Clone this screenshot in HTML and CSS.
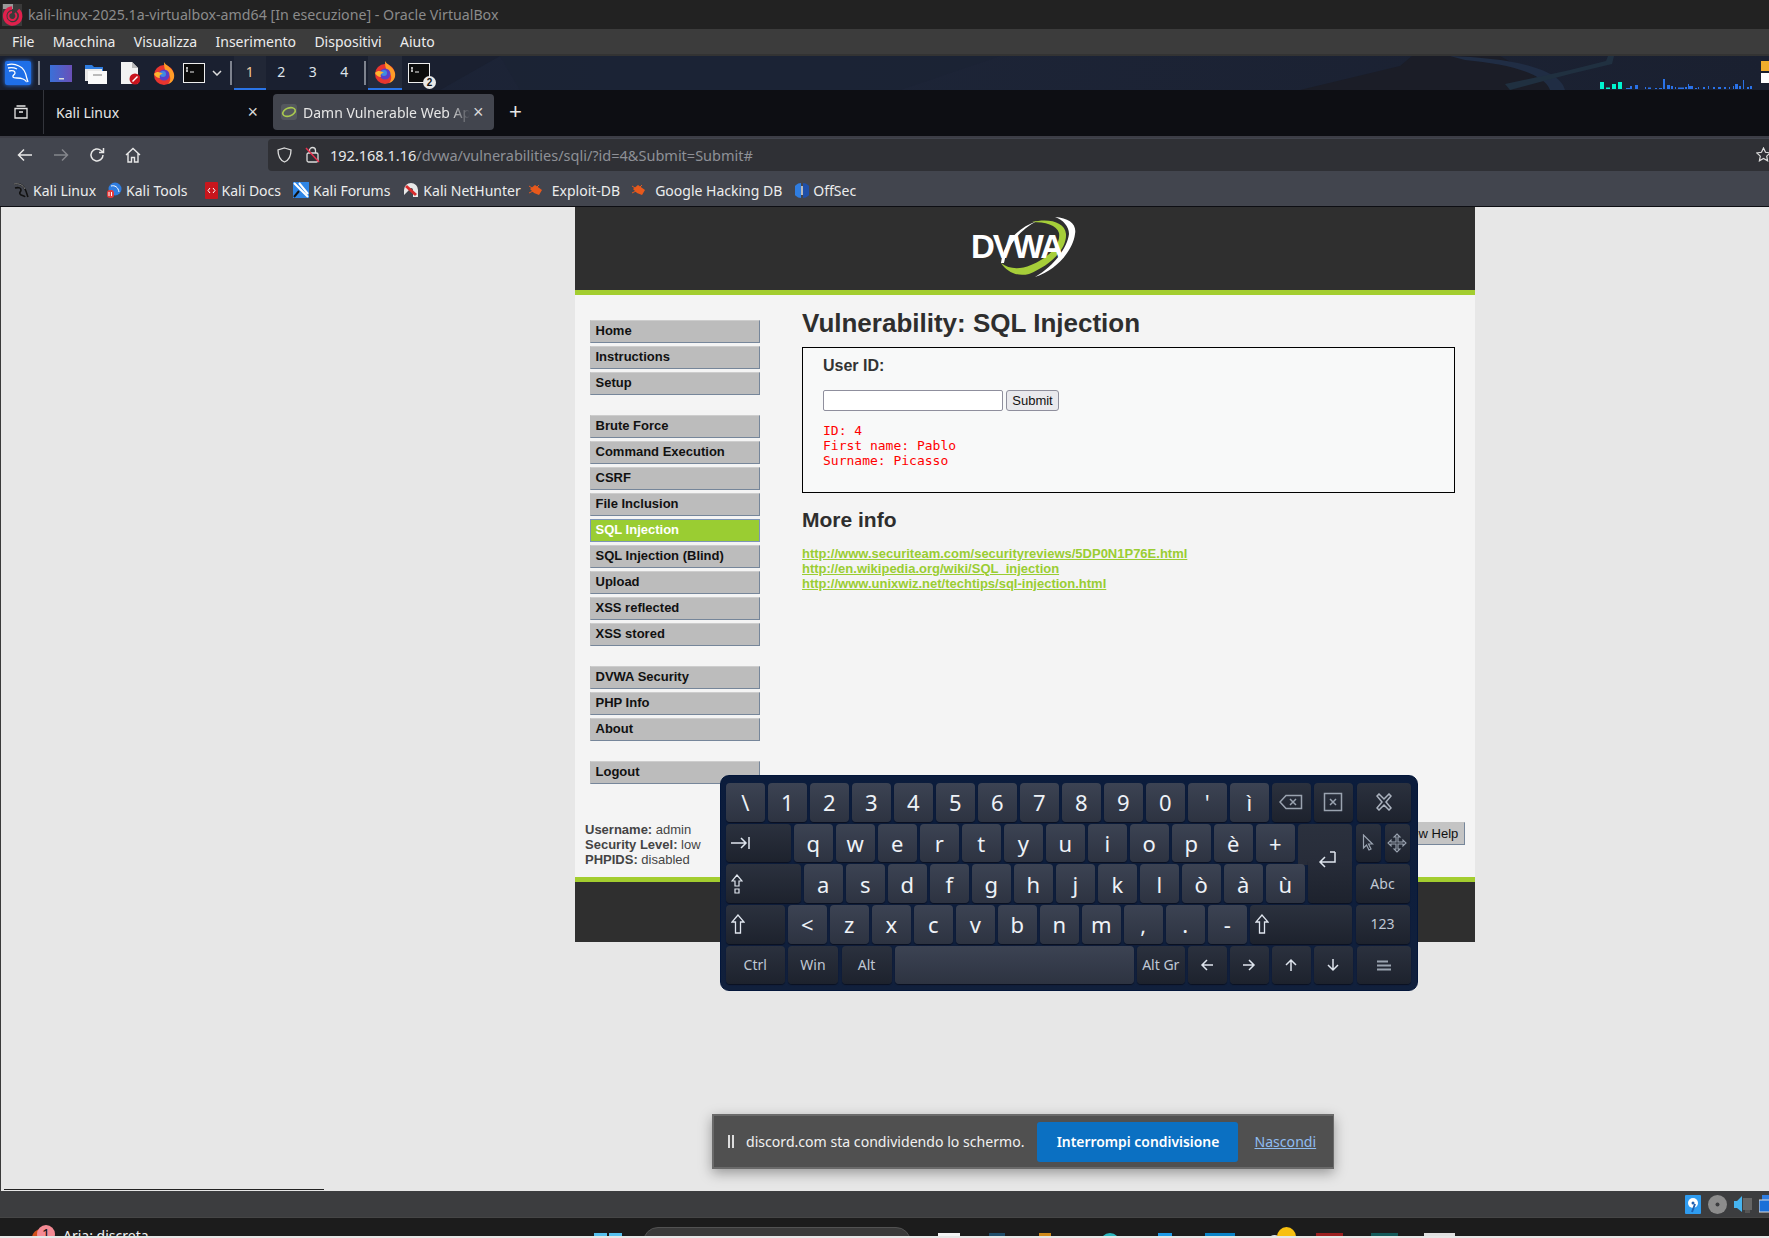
FILE: index.html
```html
<!DOCTYPE html>
<html lang="en">
<head>
  <meta charset="UTF-8" />
  <title>kali-linux-2025.1a-virtualbox-amd64 [In esecuzione] - Oracle VirtualBox</title>
  <link rel="stylesheet" href="styles.css">
</head>
<body>

  <!-- VirtualBox window chrome -->
  <div class="vb-title">
    <svg class="vb-logo" width="22" height="24" viewBox="0 0 22 24"><rect x="1" y="1" width="20" height="22" fill="#3a3a3a"/><rect x="2" y="1" width="10" height="5" fill="#999"/><path d="M11 5a8 8 0 1 0 6 2" fill="none" stroke="#e0204c" stroke-width="3.5"/><path d="M11 9a4 4 0 1 0 3 1" fill="none" stroke="#e0204c" stroke-width="2"/></svg>
    <span>kali-linux-2025.1a-virtualbox-amd64 [In esecuzione] - Oracle VirtualBox</span>
  </div>
  <div class="vb-menu">
    <span>File</span><span>Macchina</span><span>Visualizza</span><span>Inserimento</span><span>Dispositivi</span><span>Aiuto</span>
  </div>

  <!-- Kali panel -->
  <div class="panel">
    <svg class="panel-bg" width="1769" height="34" viewBox="0 0 1769 34">
      <path d="M0 0H500L440 34H0Z" fill="#1a2030"/>
      <path d="M500 0H1000L900 34H520Z" fill="#1c2334" opacity=".8"/>
      <path d="M1300 34L1400 10L1412 0H1500L1560 34Z" fill="#1b1d27"/>
      <path d="M1450 0C1510 2 1560 12 1565 34H1550C1545 18 1510 8 1465 4Z" fill="#202d44"/>
      <path d="M1510 34L1570 18L1612 8L1614 0H1608L1606 5L1570 14L1505 28Z" fill="#203040"/>
    </svg>
    <div class="panel-kali">
      <svg width="26" height="24" viewBox="0 0 26 24"><path d="M2 4c3-1 8-1 12 1 5 2 7 7 8 13l1 3M3 7c4-1 7 0 9 1M4 10c4-1 6 0 6 2s-3 2-2 4 6 0 10 2 3 3 3 3" fill="none" stroke="#fff" stroke-width="1.300"/></svg>
    </div>
    <i class="panel-sep"></i>
    <div class="panel-apps">
      <svg width="22" height="17" viewBox="0 0 22 17"><defs><linearGradient id="gd" x1="0" x2="1"><stop offset="0" stop-color="#3a70d8"/><stop offset="1" stop-color="#6a50b8"/></linearGradient></defs><rect width="22" height="17" fill="url(#gd)"/><rect x="9" y="13" width="5" height="1.5" fill="#ddd"/></svg>
      <svg class="files" width="23" height="21" viewBox="0 0 23 21"><path d="M1 2h7l2 2h9v4H1Z" fill="#2f7de0"/><rect x="1" y="6" width="17" height="12" fill="#e8e8e8"/><rect x="4" y="8" width="19" height="13" fill="#fafafa"/><rect x="9" y="11" width="9" height="2" fill="#bbb"/></svg>
      <svg class="doc" width="20" height="24" viewBox="0 0 20 24"><path d="M1 1h11l6 6v16H1Z" fill="#f2f2f2"/><path d="M12 1l6 6h-6Z" fill="#bbb"/><circle cx="15" cy="18" r="5.5" fill="#c9141e"/><path d="M12.5 20.500l5-5" stroke="#fff" stroke-width="1.500"/></svg>
      <svg class="ff" width="22" height="23" viewBox="0 0 22 23"><use href="#firefox"/></svg>
      <svg class="tm" width="22" height="20" viewBox="0 0 22 20"><use href="#term"/></svg>
      <svg class="chev" width="10" height="6" viewBox="0 0 10 6"><path d="M1 1l4 4 4-4" fill="none" stroke="#ddd" stroke-width="1.500"/></svg>
    </div>
    <i class="panel-sep sep-b"></i>
    <div class="workspaces">
      <span class="active">1</span><span>2</span><span>3</span><span>4</span>
    </div>
    <i class="panel-sep sep-c"></i>
    <div class="task active">
      <svg width="22" height="23" viewBox="0 0 22 23">
        <symbol id="firefox" viewBox="0 0 22 23"><circle cx="11" cy="13" r="10" fill="#e8352f"/><path d="M11 0c1 3 8 5 10 12 1 5-2 9-6 10 3-3 3-8 0-10-2-2-4-4-4-12Z" fill="#ff9c27"/><circle cx="11" cy="13" r="5.500" fill="#5a3ec8"/><circle cx="10" cy="12" r="3" fill="#3f8ae0"/><path d="M1 12c3-3 6-2 9 0-3 0-4 2-3 4-3 0-5-2-6-4Z" fill="#ffb52e"/></symbol>
        <use href="#firefox"/>
      </svg>
    </div>
    <div class="task term">
      <svg width="22" height="20" viewBox="0 0 22 20">
        <symbol id="term" viewBox="0 0 22 20"><rect x=".5" y=".5" width="21" height="19" fill="#0c0c0c" stroke="#eee"/><path d="M4 4v5M3 5h2M3 8h2M7 9h4" stroke="#eee" stroke-width="1" fill="none"/></symbol>
        <use href="#term"/>
      </svg>
      <b class="badge">2</b>
    </div>
    <svg class="cpu" width="158" height="12" viewBox="0 0 158 12">
      <g fill="#00f5d0"><rect x="0" y="5" width="4" height="7"/><rect x="6" y="10.500" width="4" height="1.500"/><rect x="12" y="7" width="4" height="5"/><rect x="18" y="5" width="4" height="7"/></g>
      <g fill="#2a72e8"><rect x="26" y="11" width="4" height="1"/><rect x="30" y="9" width="2" height="3"/><rect x="35" y="8" width="3" height="4"/><rect x="45" y="10" width="1" height="2"/><rect x="48" y="10.500" width="3" height="1.500"/><rect x="55" y="11" width="2" height="1"/><rect x="59" y="11" width="3" height="1"/><rect x="63" y="2" width="2" height="10"/><rect x="67" y="8" width="3" height="4"/><rect x="71" y="9" width="2" height="3"/><rect x="75" y="10" width="1" height="2"/><rect x="78" y="10.500" width="6" height="1.500"/><rect x="85" y="10" width="2" height="2"/><rect x="88" y="7" width="1" height="5"/><rect x="89" y="9" width="4" height="3"/><rect x="95" y="11" width="2" height="1"/><rect x="98" y="10" width="1" height="2"/><rect x="103" y="10" width="2" height="2"/><rect x="108" y="9" width="1" height="3"/><rect x="113" y="10" width="2" height="2"/><rect x="118" y="10" width="3" height="2"/><rect x="124" y="10" width="2" height="2"/><rect x="129" y="10" width="1" height="2"/><rect x="133" y="9" width="1" height="3"/><rect x="135" y="7" width="3" height="5"/><rect x="139" y="9" width="2" height="3"/><rect x="143" y="3" width="1" height="9"/><rect x="147" y="10" width="2" height="2"/><rect x="150" y="9" width="2" height="3"/></g>
    </svg>
    <div class="tray-stack"><i class="tray-y"></i><i class="tray-w"></i></div>
  </div>

  <!-- Firefox -->
  <div class="tabs">
    <svg class="tabs-side" width="14" height="14" viewBox="0 0 14 14"><path d="M2.500 1h9M1 3.500h12v9.500H1ZM5 7h4" fill="none" stroke="#e6e6e6" stroke-width="1.300"/></svg>
    <div class="tab">
      <span>Kali Linux</span>
      <em class="x">×</em>
    </div>
    <div class="tab selected">
      <svg width="16" height="16" viewBox="0 0 16 16"><rect width="16" height="16" rx="3" fill="#54585e"/><ellipse cx="8" cy="8" rx="6.500" ry="4" fill="none" stroke="#a9c94f" stroke-width="1.600" transform="rotate(-20 8 8)"/></svg>
      <span class="tab-label">Damn Vulnerable Web Ap</span>
      <em class="x">×</em>
    </div>
    <span class="newtab">+</span>
  </div>

  <div class="nav">
    <svg class="nav-btn" width="16" height="14" viewBox="0 0 16 14"><path d="M15 7H2M7 1.500 1.500 7 7 12.500" fill="none" stroke="#e8e8e8" stroke-width="1.500"/></svg>
    <svg class="nav-btn dim" width="16" height="14" viewBox="0 0 16 14"><path d="M1 7h13M9 1.500 14.500 7 9 12.500" fill="none" stroke="#84868c" stroke-width="1.500"/></svg>
    <svg class="nav-btn" width="16" height="16" viewBox="0 0 16 16"><path d="M14 8a6 6 0 1 1-2-4.500L14 5M14.500 1v4.500H10" fill="none" stroke="#e8e8e8" stroke-width="1.500"/></svg>
    <svg class="nav-btn" width="16" height="16" viewBox="0 0 16 16"><path d="M1 8 8 1.500 15 8M3 6.500V15h3.500v-4.500h3V15H13V6.500" fill="none" stroke="#e8e8e8" stroke-width="1.400"/></svg>
    <div class="url">
      <svg width="15" height="16" viewBox="0 0 15 16"><path d="M7.500 1 14 3c0 6-1.500 10-6.500 12C2.500 13 1 9 1 3Z" fill="none" stroke="#dcdcdc" stroke-width="1.300"/></svg>
      <svg class="lock" width="15" height="17" viewBox="0 0 15 17"><rect x="2" y="7" width="11" height="9" rx="1.500" fill="none" stroke="#dcdcdc" stroke-width="1.300"/><path d="M4.500 7V4.500a3 3 0 0 1 6 0V7" fill="none" stroke="#dcdcdc" stroke-width="1.300"/><path d="M1 2l13 14" stroke="#e8304e" stroke-width="1.500"/></svg>
      <span class="url-text"><b>192.168.1.16</b>/dvwa/vulnerabilities/sqli/?id=4&amp;Submit=Submit#</span>
      <svg class="star" width="15" height="15" viewBox="0 0 15 15"><path d="M7.500 1l2 4.300 4.700.6-3.500 3.200.9 4.700-4.100-2.300-4.100 2.300.9-4.700L.8 5.900l4.700-.6Z" fill="none" stroke="#dcdcdc" stroke-width="1.200"/></svg>
    </div>
  </div>

  <div class="bookmarks">
    <a><svg width="16" height="16" viewBox="0 0 16 16"><path d="M1 2c5-1 9 1 11 5s2 6 3 8M2 6c4-1 6 0 6 2s-2 2-1 4 4 1 5 3" fill="none" stroke="#111" stroke-width="1.600"/><path d="M1 2c5-1 9 1 11 5" fill="none" stroke="#ccc" stroke-width=".6"/></svg>Kali Linux</a>
    <a><svg width="16" height="16" viewBox="0 0 16 16"><circle cx="9" cy="7" r="6.500" fill="#2f7de0"/><path d="M5 4c4-1 7 1 8 6" stroke="#fff" fill="none"/><rect x="1" y="8" width="7" height="8" rx="3" fill="#e63a3a"/><path d="M3 10v4M5.500 10v4" stroke="#fff"/></svg>Kali Tools</a>
    <a><svg width="13" height="17" viewBox="0 0 13 17"><rect width="13" height="17" rx="1" fill="#c8161d"/><path d="M5 6 3 8.500 5 11M8 6l2 2.500L8 11" fill="none" stroke="#fff"/></svg>Kali Docs</a>
    <a><svg width="16" height="16" viewBox="0 0 16 16"><rect width="16" height="16" fill="#2f86e6"/><path d="M1 1l14 14M6 1l9 11" stroke="#fff" stroke-width="2"/><path d="M1 15 6 9" stroke="#111" stroke-width="2"/></svg>Kali Forums</a>
    <a><svg width="16" height="16" viewBox="0 0 16 16"><path d="M1 8a7 7 0 0 1 14 0v7h-5V8a2 2 0 0 0-4 0L1 13Z" fill="#e8e8e8"/><path d="M3 4l10 9" stroke="#d92c2c" stroke-width="3"/></svg>Kali NetHunter</a>
    <a class="bm-exploit"><svg width="14" height="12" viewBox="0 0 14 12"><path d="M1 5l5-4 7 5-3 5-5-2Z" fill="#e8591c"/><path d="M0 2l3 2M0 9l4-2M10 1 8 3" stroke="#e8591c"/></svg>Exploit-DB</a>
    <a class="bm-exploit"><svg width="14" height="12" viewBox="0 0 14 12"><path d="M1 5l5-4 7 5-3 5-5-2Z" fill="#e8591c"/><path d="M0 2l3 2M0 9l4-2M10 1 8 3" stroke="#e8591c"/></svg>Google Hacking DB</a>
    <a><svg width="14" height="15" viewBox="0 0 14 15"><path d="M6 0a7 7 0 0 0 0 15Z" fill="#2f7de0"/><path d="M8 0a7 7 0 0 1 0 15Z" fill="#1f4fa8"/><path d="M7 3v9" stroke="#e0e0e0" stroke-width="1.500"/></svg>OffSec</a>
  </div>

  <!-- Guest page -->
  <div class="viewport">
    <div class="dvwa">
      <div class="dvwa-header">
        <svg class="dvwa-logo" width="114" height="68" viewBox="0 0 114 68">
          <path d="M36 49C38 30 52 14 72 7 56 15 42 31 39 49Z" fill="#fff"/>
          <path d="M67 8C84 4 100 8 101 20 102 36 84 52 64 60 52 63 42 58 36 49 44 55 54 56 66 51 84 44 96 30 94 19 92 11 80 8 67 8Z" fill="#a6ce39"/>
          <path d="M90 3C104 4 112 10 110 20 108 36 92 56 70 63 86 54 102 36 104 20 104 12 98 6 90 3Z" fill="#fff"/>
          <text class="logo-text" x="6" y="44">DVWA</text>
        </svg>
      </div>
      <div class="dvwa-main">
        <ul class="menu">
          <li>Home</li>
          <li>Instructions</li>
          <li>Setup</li>
          <li class="gap">Brute Force</li>
          <li>Command Execution</li>
          <li>CSRF</li>
          <li>File Inclusion</li>
          <li class="selected">SQL Injection</li>
          <li>SQL Injection (Blind)</li>
          <li>Upload</li>
          <li>XSS reflected</li>
          <li>XSS stored</li>
          <li class="gap">DVWA Security</li>
          <li>PHP Info</li>
          <li>About</li>
          <li class="gap">Logout</li>
        </ul>
        <div class="content">
          <h1>Vulnerability: SQL Injection</h1>
          <div class="vuln-box">
            <h3>User ID:</h3>
            <div class="vuln-form">
              <input type="text" />
              <button>Submit</button>
            </div>
            <pre>ID: 4
First name: Pablo
Surname: Picasso</pre>
          </div>
          <h2>More info</h2>
          <ul class="links">
            <li><a>http://www.securiteam.com/securityreviews/5DP0N1P76E.html</a></li>
            <li><a>http://en.wikipedia.org/wiki/SQL_injection</a></li>
            <li><a>http://www.unixwiz.net/techtips/sql-injection.html</a></li>
          </ul>
        </div>
      </div>
      <div class="dvwa-status">
        <div class="info">
          <b>Username:</b> admin<br>
          <b>Security Level:</b> low<br>
          <b>PHPIDS:</b> disabled
        </div>
        <div class="help-btn">View Help</div>
      </div>
      <div class="dvwa-footer"></div>
    </div>
    <i class="scrollbar"></i>

    <!-- Onboard keyboard -->
    <div class="keyboard">
      <div class="kb-row">
        <div class="key">\</div><div class="key">1</div><div class="key">2</div><div class="key">3</div><div class="key">4</div><div class="key">5</div><div class="key">6</div><div class="key">7</div><div class="key">8</div><div class="key">9</div><div class="key">0</div><div class="key">'</div><div class="key">ì</div>
        <div class="key dark"><svg width="24" height="16" viewBox="0 0 24 16"><path d="M7 1.500H22.500V14.500H7L1 8Z M11 5l6 6M17 5l-6 6" fill="none" stroke="#9aa3b0" stroke-width="1.500"/></svg></div>
        <div class="key dark"><svg width="20" height="20" viewBox="0 0 20 20"><path d="M1.500 1.500H18.500V18.500H1.500Z M7 7l6 6M13 7l-6 6" fill="none" stroke="#9aa3b0" stroke-width="1.500"/></svg></div>
        <div class="key dark wide gap-l"><svg width="16" height="18" viewBox="0 0 16 18"><path d="M3 1 8 6l5-5 2 2-5 6 5 6-2 2-5-5-5 5-2-2 5-6-5-6Z" fill="none" stroke="#aab2be" stroke-width="1.500"/></svg></div>
      </div>
      <div class="kb-row">
        <div class="key dark w-tab left"><svg width="20" height="12" viewBox="0 0 20 12"><path d="M0 6h15M10 1l5 5-5 5M18 0v12" fill="none" stroke="#dfe5ee" stroke-width="1.500"/></svg></div>
        <div class="key">q</div><div class="key">w</div><div class="key">e</div><div class="key">r</div><div class="key">t</div><div class="key">y</div><div class="key">u</div><div class="key">i</div><div class="key">o</div><div class="key">p</div><div class="key">è</div><div class="key">+</div>
        <div class="key dark enter-top"></div>
        <div class="key dark half gap-l"><svg width="12" height="18" viewBox="0 0 12 18"><path d="M1.500 1v13l3-3 2.500 5 2-1-2.500-5h4Z" fill="none" stroke="#9aa3b0" stroke-width="1.200"/></svg></div>
        <div class="key dark half"><svg width="20" height="20" viewBox="0 0 20 20"><path d="M10 1l3 3h-2v5h5V7l3 3-3 3v-2h-5v5h2l-3 3-3-3h2v-5H4v2l-3-3 3-3v2h5V4H7Z" fill="none" stroke="#9aa3b0" stroke-width="1.100"/></svg></div>
      </div>
      <div class="kb-row">
        <div class="key dark w-caps left"><svg width="12" height="20" viewBox="0 0 12 20"><path d="M6 1 1 7h3v5h4V7h3ZM4 15h4v4H4Z" fill="none" stroke="#dfe5ee" stroke-width="1.200"/></svg></div>
        <div class="key">a</div><div class="key">s</div><div class="key">d</div><div class="key">f</div><div class="key">g</div><div class="key">h</div><div class="key">j</div><div class="key">k</div><div class="key">l</div><div class="key">ò</div><div class="key">à</div><div class="key">ù</div>
        <div class="key dark enter-bottom"><svg width="18" height="18" viewBox="0 0 18 18"><path d="M17 1v10H3M7 6l-5 5 5 5M12 1h5" fill="none" stroke="#dfe5ee" stroke-width="1.500"/></svg></div>
        <div class="key dark wide gap-l label">Abc</div>
      </div>
      <div class="kb-row">
        <div class="key dark w-shift left"><svg width="14" height="20" viewBox="0 0 14 20"><path d="M7 1 1 8h3.500v11h5V8H13Z" fill="none" stroke="#dfe5ee" stroke-width="1.300"/></svg></div>
        <div class="key">&lt;</div><div class="key">z</div><div class="key">x</div><div class="key">c</div><div class="key">v</div><div class="key">b</div><div class="key">n</div><div class="key">m</div><div class="key">,</div><div class="key">.</div><div class="key">-</div>
        <div class="key dark w-rshift left"><svg width="14" height="20" viewBox="0 0 14 20"><path d="M7 1 1 8h3.500v11h5V8H13Z" fill="none" stroke="#dfe5ee" stroke-width="1.300"/></svg></div>
        <div class="key dark wide gap-l label">123</div>
      </div>
      <div class="kb-row">
        <div class="key dark w-shift label">Ctrl</div>
        <div class="key dark w-win label">Win</div>
        <div class="key dark w-win label">Alt</div>
        <div class="key w-space"></div>
        <div class="key dark w-altgr label">Alt Gr</div>
        <div class="key dark"><svg width="14" height="14" viewBox="0 0 14 14"><path d="M13 7H2M7 2 2 7l5 5" fill="none" stroke="#dfe5ee" stroke-width="1.500"/></svg></div>
        <div class="key dark"><svg width="14" height="14" viewBox="0 0 14 14"><path d="M1 7h11M7 2l5 5-5 5" fill="none" stroke="#dfe5ee" stroke-width="1.500"/></svg></div>
        <div class="key dark"><svg width="14" height="14" viewBox="0 0 14 14"><path d="M7 13V2M2 7l5-5 5 5" fill="none" stroke="#dfe5ee" stroke-width="1.500"/></svg></div>
        <div class="key dark"><svg width="14" height="14" viewBox="0 0 14 14"><path d="M7 1v11M2 7l5 5 5-5" fill="none" stroke="#dfe5ee" stroke-width="1.500"/></svg></div>
        <div class="key dark wide gap-l"><svg width="16" height="11" viewBox="0 0 16 11"><path d="M1 1.500h11M1 5.500h14M1 9.500h14" fill="none" stroke="#9aa3b0" stroke-width="1.800"/></svg></div>
      </div>
    </div>

    <!-- Discord share bar -->
    <div class="share-bar">
      <i class="pause"></i>
      <span class="share-text">discord.com sta condividendo lo schermo.</span>
      <span class="share-stop">Interrompi condivisione</span>
      <a class="share-hide">Nascondi</a>
    </div>
  </div>

  <!-- VirtualBox status bar -->
  <div class="vb-status">
    <svg width="16" height="19" viewBox="0 0 16 19"><rect width="16" height="19" rx="1" fill="#2f9cf0"/><circle cx="8" cy="8" r="5" fill="#fff"/><circle cx="8" cy="8" r="1.500" fill="#1f5fb0"/><path d="M10 9 7 17" stroke="#1f5fb0" stroke-width="2"/></svg>
    <svg width="19" height="19" viewBox="0 0 19 19"><circle cx="9.500" cy="9.500" r="9.500" fill="#8c8c8c"/><circle cx="9.500" cy="9.500" r="2" fill="#3c3d3f"/></svg>
    <svg width="18" height="19" viewBox="0 0 18 19"><path d="M0 6h3l5-5v16l-5-4H0Z" fill="#46b4f0"/><rect x="9" y="3" width="9" height="12" fill="#666"/><rect x="11" y="15" width="5" height="3" fill="#555"/></svg>
    <svg class="vb-net" width="15" height="19" viewBox="0 0 15 19"><rect x="3" y="0" width="12" height="10" fill="#2f7de0"/><rect x="0" y="5" width="15" height="12" fill="#1a6fd8" stroke="#dcdcdc"/></svg>
  </div>

  <!-- Host taskbar, cut off by the capture -->
  <div class="taskbar">
    <div class="tb-notice"><i class="tb-badge">1</i><span>Aria: discreta</span></div>
    <i class="tb-start"></i>
    <i class="tb-search"></i>
    <i class="tb-i i1"></i><i class="tb-i i2"></i><i class="tb-i i3"></i><i class="tb-i i4"></i><i class="tb-i i5"></i><i class="tb-i i6"></i><i class="tb-i i7"></i><i class="tb-i i8"></i><i class="tb-i i9"></i><i class="tb-i i10"></i>
  </div>

</body>
</html>
```

FILE: styles.css
```css
* {
  box-sizing: border-box;
}

body {
  margin: 0;
  width: 1769px;
  height: 1238px;
  overflow: hidden;
  font-family: "Noto Sans", sans-serif;
  background: #e7e7e7;
  display: flex;
  flex-direction: column;
}

/* VirtualBox chrome */
.vb-title {
  height: 29px;
  background: #222;
  color: #8b8b8b;
  font-size: 14.200px;
  display: flex;
  align-items: center;
  padding-left: 1px;
  gap: 5px;
  flex: none;
}

.vb-menu {
  height: 27px;
  background: #3c3c3c;
  border-bottom: 2px solid #333;
  color: #ececec;
  font-size: 14px;
  display: flex;
  align-items: center;
  gap: 18.300px;
  padding-left: 12px;
  flex: none;
}

/* Kali panel */
.panel {
  position: relative;
  height: 34px;
  background: linear-gradient(90deg, #1a2031, #1d2538 40%, #1a2030);
  display: flex;
  align-items: center;
  flex: none;
}

.panel > * {
  position: relative;
}

.panel > .panel-bg {
  position: absolute;
  left: 0;
  top: 0;
}

.panel-kali {
  width: 26px;
  height: 24px;
  margin-left: 5px;
  background: #1f6fe8;
  box-shadow: 0 0 4px #2a7cff;
  border-radius: 2px;
  display: flex;
}

.panel-sep {
  width: 2px;
  height: 24px;
  background: #7e838e;
  margin-left: 7px;
}

.panel-apps {
  display: flex;
  align-items: center;
  margin-left: 10px;
}

.panel-apps .files {
  margin-left: 12px;
}

.panel-apps .doc {
  margin-left: 13px;
}

.panel-apps .ff {
  margin-left: 13px;
}

.panel-apps .tm {
  margin-left: 8px;
}

.panel-apps .chev {
  margin-left: 7px;
}

.sep-b {
  margin-left: 8px;
}

.workspaces {
  display: flex;
  margin-left: 2px;
  height: 34px;
  font-size: 14px;
}

.workspaces span {
  width: 31.500px;
  text-align: center;
  line-height: 32px;
  color: #dfe3ea;
}

.workspaces .active {
  border-bottom: 2px solid #2a74e6;
  background: rgba(255, 255, 255, 0.03);
  color: #f0c9a0;
}

.sep-c {
  margin-left: 4px;
}

.task {
  width: 34px;
  height: 34px;
  margin-left: 2px;
  display: flex;
  align-items: center;
  justify-content: center;
}

.task.active {
  border-bottom: 2px solid #2a74e6;
  background: rgba(255, 255, 255, 0.05);
}

.task.term {
  width: 22px;
  margin-left: 6px;
}

.badge {
  position: absolute;
  right: -6px;
  bottom: 1px;
  width: 13px;
  height: 13px;
  border-radius: 50%;
  background: #e8e8e8;
  color: #111;
  font: bold 10px/13px "Liberation Sans", sans-serif;
  text-align: center;
}

.cpu {
  margin-left: auto;
  margin-right: 3px;
  align-self: flex-end;
  margin-bottom: 1px;
}

.tray-stack {
  width: 8px;
  margin-bottom: 2px;
  flex: none;
}

.tray-y {
  display: block;
  height: 10px;
  background: #f0ac2c;
  margin-bottom: 2px;
}

.tray-w {
  display: block;
  height: 10px;
  background: #fff;
}

/* Firefox tab strip */
.tabs {
  height: 48px;
  padding-bottom: 2px;
  background: #0d0e13;
  color: #e6e6e6;
  font-size: 14px;
  display: flex;
  align-items: center;
  border-bottom: 2px solid #3c3d46;
  flex: none;
}

.tabs-side {
  margin-left: 14px;
}

.tab {
  height: 36px;
  display: flex;
  align-items: center;
  flex: none;
}

.tab:not(.selected) {
  margin-left: 15px;
  width: 218px;
  height: 44px;
  padding-left: 12px;
  border-left: 1px solid #33353c;
  justify-content: space-between;
  padding-right: 3px;
}

.tab .x {
  font-style: normal;
  font-size: 18px;
  color: #d8d8d8;
  font-family: "Liberation Sans", sans-serif;
}

.tab.selected {
  width: 221px;
  margin-left: 12px;
  background: #42454e;
  border-radius: 4px;
  padding: 0 8px;
  gap: 6px;
}

.tab-label {
  width: 167px;
  flex: none;
  white-space: nowrap;
  overflow: hidden;
  -webkit-mask-image: linear-gradient(90deg, #000 88%, transparent);
  mask-image: linear-gradient(90deg, #000 88%, transparent);
}

.tab.selected .x {
  margin-left: -3px;
}

.newtab {
  margin-left: 15px;
  font-size: 22px;
  font-weight: 300;
  font-family: "Liberation Sans", sans-serif;
}

.nav {
  height: 34px;
  background: #42454e;
  display: flex;
  align-items: center;
  flex: none;
}

.nav-btn {
  margin-left: 20px;
  flex: none;
}

.nav-btn:first-child {
  margin-left: 17px;
}

.url {
  height: 32px;
  flex: 1;
  margin-left: 127px;
  padding-bottom: 1px;
  background: #2f3035;
  border-radius: 4px 0 0 4px;
  display: flex;
  align-items: center;
  padding-left: 9px;
  color: #8e9097;
  font-size: 14.500px;
  position: relative;
}

.lock {
  margin-left: 13px;
}

.url-text {
  margin-left: 10px;
}

.url-text b {
  font-weight: 400;
  color: #e9e9ea;
}

.star {
  margin-left: auto;
  margin-right: -2px;
}

.bookmarks {
  height: 35px;
  padding-top: 2px;
  background: #42454e;
  color: #eceded;
  font-size: 14px;
  display: flex;
  align-items: center;
  border-bottom: 1px solid #0d0e13;
  flex: none;
}

.bookmarks a {
  display: flex;
  align-items: center;
  gap: 4px;
}

.bookmarks a:nth-child(1) { margin-left: 13px; }
.bookmarks a:nth-child(2) { margin-left: 10px; }
.bookmarks a:nth-child(3) { margin-left: 17px; }
.bookmarks a:nth-child(4) { margin-left: 12px; }
.bookmarks a:nth-child(5) { margin-left: 13px; }
.bookmarks a:nth-child(6) { margin-left: 8px; }
.bookmarks a:nth-child(7) { margin-left: 12px; }
.bookmarks a:nth-child(8) { margin-left: 13px; }

.bookmarks .bm-exploit {
  gap: 9px;
}

/* Guest page */
.viewport {
  position: relative;
  height: 984px;
  background: #e7e7e7;
  border-left: 1px solid #3a3a3a;
  flex: none;
  font-family: "Liberation Sans", sans-serif;
}

.dvwa {
  width: 900px;
  margin-left: 574px;
  background: #f4f4f4;
  color: #333;
  font-size: 13px;
}

.dvwa-header {
  height: 88px;
  background: #2f2f2f;
  border-bottom: 5px solid #a3cd2f;
  display: flex;
  justify-content: center;
}

.dvwa-logo {
  margin: 7px 0 0 -7px;
}

.logo-text {
  font: bold 33px "Liberation Sans", sans-serif;
  letter-spacing: -2px;
  fill: #fff;
}

.dvwa-main {
  display: flex;
  height: 527px;
}

.menu {
  list-style: none;
  margin: 25px 0 0 15px;
  padding: 0;
  width: 170px;
  flex: none;
}

.menu li {
  height: 23px;
  margin-bottom: 3px;
  padding-left: 4.500px;
  background: #bcbcbc;
  border: 1px solid #bcbcbc;
  border-top: 1px solid #cdcdcd;
  border-right-color: #76869a;
  border-bottom-color: #76869a;
  color: #111;
  font-weight: bold;
  line-height: 20px;
}

.menu .gap {
  margin-top: 20px;
}

.menu .selected {
  background: #9acd32;
  border-color: #7d95b8;
  color: #fff;
}

.content {
  margin-left: 42px;
  width: 653px;
}

.content h1 {
  margin: 13px 0 0;
  font-size: 26px;
  line-height: 30px;
  color: #2e2e2e;
}

.vuln-box {
  height: 146px;
  margin-top: 9px;
  padding: 9px 20px;
  border: 1px solid #000;
  background: #f8f9f9;
}

.vuln-box h3 {
  margin: 0;
  font-size: 16px;
  line-height: 18px;
  color: #333;
}

.vuln-form {
  display: flex;
  gap: 3px;
  margin-top: 15px;
}

.vuln-form input {
  width: 180px;
  height: 21px;
  padding: 0;
  border: 1px solid #8f8f9d;
  border-radius: 2px;
  background: #fff;
}

.vuln-form button {
  width: 53px;
  height: 21px;
  padding: 0;
  border: 1px solid #8f8f9d;
  border-radius: 3px;
  background: #e9e9ed;
  color: #111;
  font: 13px "Liberation Sans", sans-serif;
}

.vuln-box pre {
  margin: 12px 0 0;
  color: #f00;
  font: 13px/15px "DejaVu Sans Mono", monospace;
}

.content h2 {
  margin: 14px 0 0;
  font-size: 21px;
  line-height: 26px;
  color: #2e2e2e;
}

.links {
  list-style: none;
  margin: 13px 0 0;
  padding: 0;
  line-height: 15px;
  font-weight: bold;
}

.links a {
  color: #9acd32;
  text-decoration: underline;
}

.dvwa-status {
  height: 55px;
  display: flex;
  justify-content: space-between;
  padding: 0 10px;
  align-items: flex-start;
}

.info {
  line-height: 15px;
  color: #444;
}

.help-btn {
  height: 23px;
  width: 72px;
  padding-left: 6px;
  background: #c4c4c4;
  border: 1px solid #c4c4c4;
  border-right-color: #76869a;
  border-bottom-color: #76869a;
  color: #111;
  line-height: 21px;
}

.dvwa-footer {
  height: 65px;
  background: #2f2f2f;
  border-top: 5px solid #a3cd2f;
}

.scrollbar {
  position: absolute;
  left: 3px;
  bottom: 1px;
  width: 320px;
  height: 1px;
  background: #222;
}

/* On-screen keyboard */
.keyboard {
  position: absolute;
  left: 719px;
  top: 568px;
  width: 698px;
  height: 216px;
  padding: 7px 5px;
  border-radius: 9px;
  background: linear-gradient(180deg, #0b1c3c, #11203c);
  border: 1px solid #03163a;
  display: flex;
  flex-direction: column;
  gap: 2.200px;
  color: #eef2f7;
  font-family: "Noto Sans", sans-serif;
  font-size: 22px;
}

.kb-row {
  display: flex;
  gap: 3.500px;
  height: 38.500px;
}

.key {
  flex: 0 0 38.500px;
  height: 38.500px;
  border-radius: 4px;
  background: linear-gradient(180deg, #3c4353, #2d3341);
  box-shadow: 0 1px 1px #0a1020;
  display: flex;
  align-items: center;
  justify-content: center;
  line-height: 1;
}

.key.dark {
  background: linear-gradient(180deg, #2b313e, #1d222d);
}

.key.left {
  justify-content: flex-start;
  padding-left: 5px;
}

.key.label {
  font-size: 14px;
  color: #c0c8d4;
}

.key.gap-l {
  margin-left: 0.500px;
}

.key.wide {
  flex-basis: 54px;
}

.key.half {
  flex-basis: 25.500px;
}

.w-tab {
  flex-basis: 64.500px;
}

.w-caps {
  flex-basis: 74.500px;
}

.w-shift {
  flex-basis: 58.500px;
}

.w-win {
  flex-basis: 50px;
}

.w-space {
  flex-basis: 238.500px;
}

.w-altgr {
  flex-basis: 47.500px;
}

.w-rshift {
  flex-basis: 101.500px;
}

.key.enter-top {
  flex-basis: 53.500px;
  height: 41px;
  border-radius: 4px 4px 0 0;
  box-shadow: none;
  background: linear-gradient(180deg, #2b313e, #272c39);
}

.key.enter-bottom {
  flex-basis: 43.500px;
  margin-top: -3px;
  height: 41.500px;
  border-radius: 0 0 4px 4px;
  background: linear-gradient(180deg, #272c39, #1d222d);
  align-items: flex-start;
}

.enter-bottom svg {
  margin: -10px 0 0 -5px;
}

/* Discord bar */
.share-bar {
  position: absolute;
  left: 711px;
  top: 907px;
  width: 622px;
  height: 55px;
  padding-left: 14px;
  background: #505050;
  border: 2px solid #6a6a6a;
  border-width: 2px 1px 2px 2px;
  box-shadow: 0 4px 12px rgba(0, 0, 0, 0.35);
  color: #f0f0f0;
  font-family: "Noto Sans", sans-serif;
  font-size: 14.100px;
  display: flex;
  align-items: center;
}

.pause {
  width: 6px;
  height: 13px;
  border-left: 2px solid #ddd;
  border-right: 2px solid #ddd;
  flex: none;
}

.share-text {
  margin-left: 12px;
}

.share-stop {
  margin-left: 13px;
  width: 201px;
  height: 40px;
  border-radius: 3px;
  background: #0b70c2;
  color: #fff;
  font-size: 13.900px;
  font-weight: 600;
  text-align: center;
  line-height: 40px;
  flex: none;
}

.share-hide {
  margin-left: 16px;
  color: #8fbcf0;
  text-decoration: underline;
}

/* VirtualBox status */
.vb-status {
  height: 27px;
  background: #3c3d3f;
  border-bottom: 1px solid #454545;
  display: flex;
  align-items: center;
  justify-content: flex-end;
  gap: 7px;
  flex: none;
}

.vb-net {
  margin-right: -5px;
}

/* Host taskbar */
.taskbar {
  height: 18px;
  background: #1c1c1c;
  display: flex;
  overflow: hidden;
  flex: none;
  position: relative;
  color: #f2f2f2;
  font-size: 14px;
}

.tb-notice {
  display: flex;
  margin: 7px 0 0 32px;
  width: 556px;
  flex: none;
  white-space: nowrap;
}

.tb-notice span {
  margin: 3px 0 0 8px;
  line-height: 16px;
}

.tb-badge {
  width: 18px;
  height: 18px;
  border-radius: 50%;
  background: #f48a94;
  color: #111;
  font-style: normal;
  text-align: center;
  line-height: 18px;
  box-shadow: -5px 4px 0 #d2501a;
  margin-left: 5px;
}

.tb-start {
  width: 28px;
  height: 17px;
  margin: 15px 0 0 6px;
  background: linear-gradient(90deg, #55c0ee 48%, transparent 48% 52%, #55c0ee 52%);
  flex: none;
}

.tb-search {
  width: 268px;
  height: 30px;
  margin: 9px 0 0 21px;
  border-radius: 15px;
  background: #3a3a3a;
  border: 1px solid #525252;
  flex: none;
}

.tb-i {
  height: 20px;
  margin-top: 15px;
  flex: none;
}

.i1 { width: 22px; margin-left: 27px; background: #f4f4f4; }
.i2 { width: 16px; margin-left: 29px; background: #1f4d6a; }
.i3 { width: 12px; margin-left: 34px; background: #d08a1a; }
.i4 { width: 20px; margin-left: 49px; background: #2bb8c0; border-radius: 50%; }
.i5 { width: 14px; margin-left: 38px; background: #1e9be8; }
.i6 { width: 30px; margin-left: 33px; background: #0a84c8; }
.i7 { width: 19px; margin-left: 42px; margin-top: 9px; background: #f8c010; border-radius: 50%; box-shadow: -12px 6px 0 -2px #dde3e6; }
.i8 { width: 27px; margin-left: 20px; background: #9c2020; }
.i9 { width: 27px; margin-left: 28px; background: #145a5a; }
.i10 { width: 31px; margin-left: 26px; background: #e0e0e0; }
```
